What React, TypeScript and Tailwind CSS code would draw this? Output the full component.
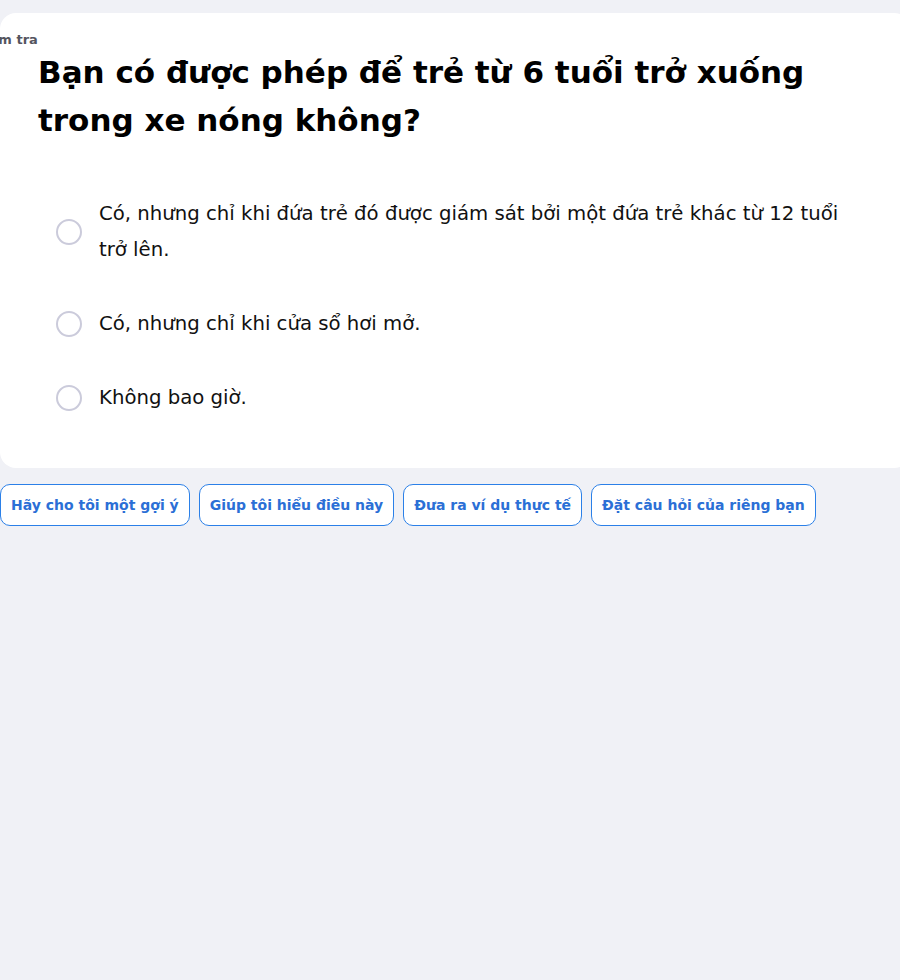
import { useState } from 'react'

const options = [
  'Có, nhưng chỉ khi đứa trẻ đó được giám sát bởi một đứa trẻ khác từ 12 tuổi trở lên.',
  'Có, nhưng chỉ khi cửa sổ hơi mở.',
  'Không bao giờ.',
]

const helpers = [
  'Hãy cho tôi một gợi ý',
  'Giúp tôi hiểu điều này',
  'Đưa ra ví dụ thực tế',
  'Đặt câu hỏi của riêng bạn',
]

export default function App() {
  const [selected, setSelected] = useState<number | null>(null)

  return (
    <div
      className="min-h-[980px] w-[900px] overflow-hidden bg-[#f0f1f6] pt-[13px]"
      style={{ fontFamily: '"DejaVu Sans", "Noto Sans", sans-serif' }}
    >
      <div className="w-[910px] rounded-2xl bg-white pt-[19px] pb-[52px]">
        <p className="-ml-[25px] text-[13px] leading-[16px] font-bold text-[#55555f]">Kiểm tra</p>
        <h1 className="w-[860px] pl-[38px] text-[31px] leading-[48px] font-bold text-black">
          Bạn có được phép để trẻ từ 6 tuổi trở xuống trong xe nóng không?
        </h1>

        <div className="mt-[52px] flex w-[850px] flex-col gap-[38px] pl-[56px]">
          {options.map((opt, i) => (
            <label key={i} className="flex cursor-pointer items-center gap-[17px]">
              <span
                onClick={() => setSelected(i)}
                className={`flex h-[26px] w-[26px] shrink-0 items-center justify-center rounded-full border-2 ${
                  selected === i ? 'border-[#1f6feb]' : 'border-[#cbcbdb]'
                }`}
              >
                {selected === i && <span className="h-3 w-3 rounded-full bg-[#1f6feb]" />}
              </span>
              <span className="text-[19.7px] leading-[36px] text-[#111]">{opt}</span>
            </label>
          ))}
        </div>
      </div>

      <div className="mt-4 flex gap-[9px]">
        {helpers.map((h) => (
          <button
            key={h}
            className="h-[42px] rounded-[10px] border border-[#2b80e8] bg-white px-[10px] text-[14px] font-bold text-[#2b6fd6]"
          >
            {h}
          </button>
        ))}
      </div>
    </div>
  )
}
